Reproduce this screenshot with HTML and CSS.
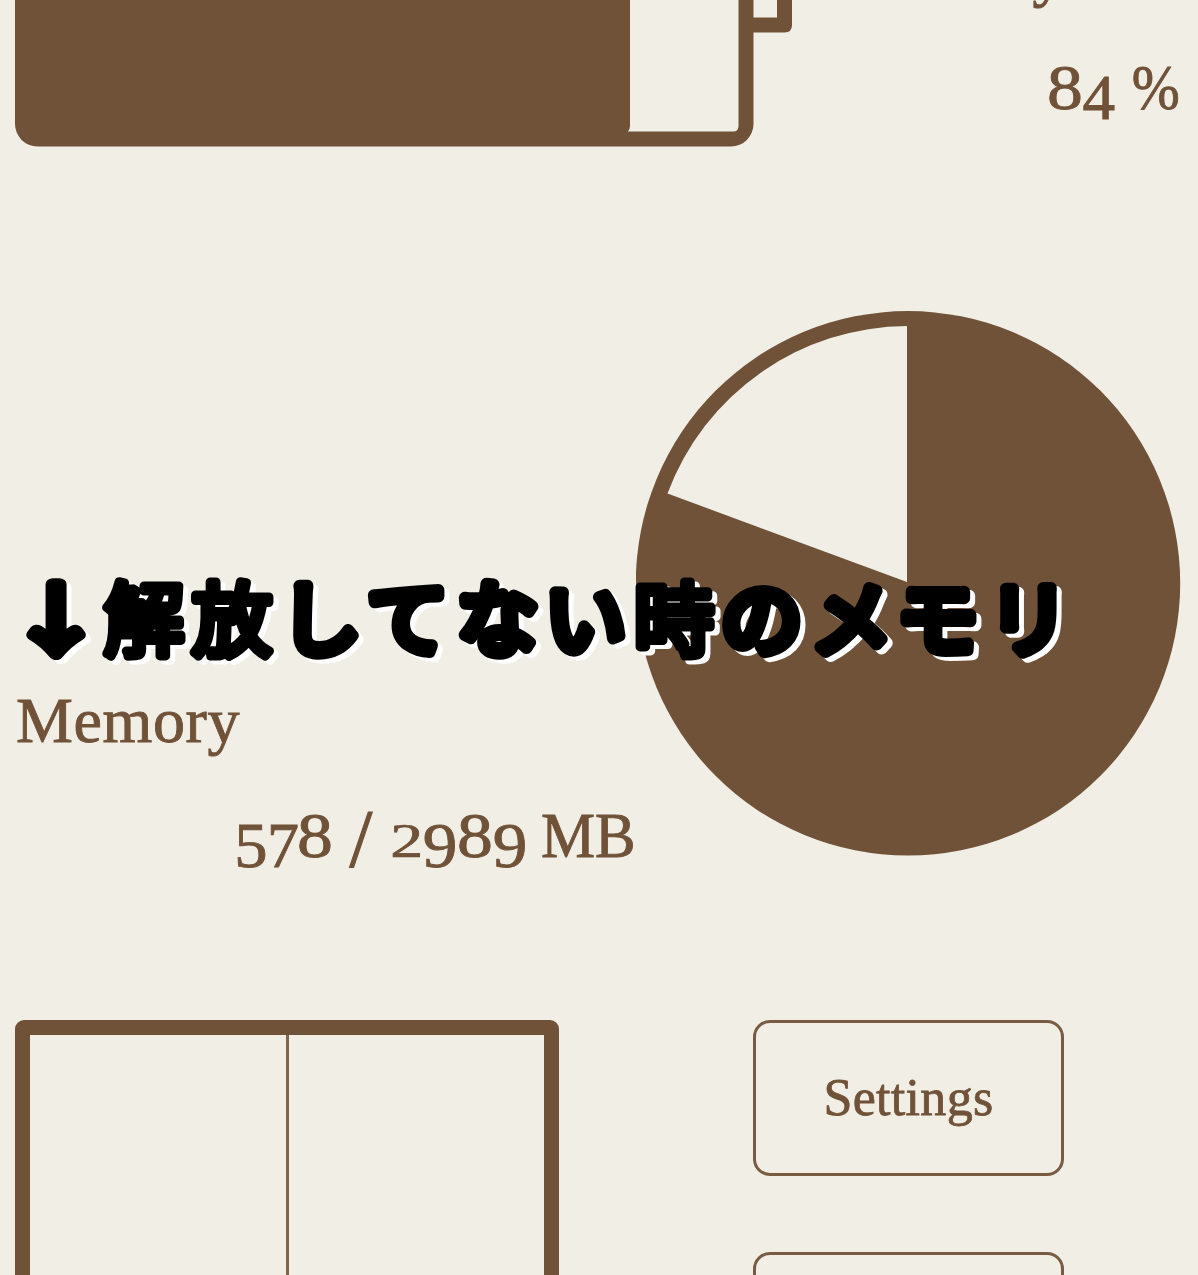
FILE: index.html
```html
<!DOCTYPE html>
<html lang="ja">
<head>
<meta charset="utf-8">
<title>Battery and Memory</title>
<link rel="stylesheet" href="styles.css">
</head>
<body>
<main class="page">
  <section class="battery-row">
    <svg class="battery" width="778" height="147" viewBox="0 0 778 147" aria-hidden="true">
      <path class="ink" fill-rule="evenodd" d="M0 0H738.500V124A22.500 22.500 0 0 1 716 146.500H22.500A22.500 22.500 0 0 1 0 124ZM615 0V126Q615 129 613 131.500H718Q723.500 131.500 723.500 126V0Z"/>
      <path class="ink" d="M738 17.500H762V0H777V25Q777 32.500 769.500 32.500H738Z"/>
    </svg>
    <div class="battery-text">
      <div class="label battery-label">Battery</div>
      <div class="value"><span class="n8">8</span><span class="n4">4</span><span class="sp"> </span><span class="pct">%</span></div>
    </div>
  </section>
  <section class="memory-row">
    <div class="memory-text">
      <div class="label">Memory</div>
      <div class="value"><span class="n5">5</span><span class="n7">7</span><span class="n8">8</span><span class="sp"> </span><span class="slash">/</span><span class="sp"> </span><span class="n2">2</span><span class="n9">9</span><span class="n8">8</span><span class="n9">9</span><span class="sp"> </span><span class="unit">MB</span></div>
    </div>
    <svg class="pie" width="545" height="545" viewBox="0 0 545 545" aria-hidden="true">
      <circle class="ink" cx="272" cy="272.300" r="272.200"/>
      <path class="paper" d="M271 271V15A257 257 0 0 0 31.500 182.500Z"/>
    </svg>
  </section>
  <section class="bottom-row">
    <div class="panes"><div class="pane"></div><div class="pane"></div></div>
    <nav class="buttons">
      <button class="button" type="button">Settings</button>
      <button class="button" type="button" aria-label="More"></button>
    </nav>
  </section>
  <svg class="caption" width="1198" height="130" viewBox="0 0 1198 130">
    <text class="kana" transform="translate(56 88) scale(1.2 .94)" text-anchor="middle">↓</text>
    <text class="kanji" y="89" x="104 192">解放</text>
    <text class="kana" y="89" x="280 367 457 545">してない</text>
    <text class="kanji" y="89" x="634">時</text>
    <text class="kana" y="89" x="721 811 897 988">のメモリ</text>
  </svg>
</main>
</body>
</html>
```
FILE: styles.css
```css
* { box-sizing: border-box; }
body { margin: 0; background: #f1eee5; }
.page {
  position: relative;
  width: 1198px;
  height: 1275px;
  overflow: hidden;
  display: flex;
  flex-direction: column;
  color: #705238;
  font-family: "Liberation Serif", serif;
}
.ink { fill: #705238; }
.paper { fill: #f1eee5; }
svg { display: block; }
.label, .value {
  font-size: 64px;
  line-height: 80px;
  height: 80px;
  white-space: nowrap;
  -webkit-text-stroke: 0.9px #705238;
}
.label { letter-spacing: 0.6px; }
.battery-row {
  display: flex;
  justify-content: space-between;
  height: 147px;
  padding: 0 20px 0 15px;
}
.battery-text {
  display: flex;
  flex-direction: column;
  align-items: flex-end;
  gap: 35px;
  margin-top: -67px;
}
.battery-label { padding-right: 113px; }
.value { display: flex; }
.value span {
  display: block;
  text-align: center;
  white-space: pre;
}
.value .sp { width: 14.5px; }
.value .n8 { width: 35.8px; transform: scaleX(1.12); }
.value .n5 { width: 31.7px; transform: translateY(10px) scaleX(1.04); }
.value .n7 { width: 30.1px; transform: translateY(10px); }
.value .n9 { width: 33.9px; transform: translateY(10px) scaleX(1.08); }
.value .n4 { width: 33.9px; transform: translate(-1px, 10px) scaleX(1.02); }
.value .n2 { width: 33.5px; transform: translateY(3px) scale(1.03, 0.77); transform-origin: 50% 48px; }
.value .slash { width: 28px; transform: translateY(3px) scale(1.28, 1.3); }
.value .pct { width: 49px; margin-right: -2px; text-indent: -2px; transform: scaleX(0.9); }
.value .unit { width: 94.6px; transform: scaleX(0.95); transform-origin: 0 50%; }
.memory-row {
  display: flex;
  justify-content: space-between;
  height: 545px;
  margin-top: 164px;
  padding: 0 17px 0 16px;
}
.memory-text {
  display: flex;
  flex-direction: column;
  gap: 35px;
  width: 620px;
  padding-top: 370px;
}
.memory-text .value { align-self: flex-end; }
.bottom-row {
  display: flex;
  gap: 194px;
  margin-top: 164px;
  padding-left: 15px;
}
.panes {
  display: grid;
  grid-template-columns: 259px 1fr;
  width: 544px;
  height: 544px;
  border: 15px solid #705238;
  border-radius: 9px;
}
.pane:first-child { border-right: 3px solid #80644c; }
.buttons {
  display: flex;
  flex-direction: column;
  gap: 76px;
}
.button {
  width: 311px;
  height: 156px;
  padding: 0 0 1px;
  border: 3px solid #785b42;
  border-radius: 17px;
  background: transparent;
  color: #705238;
  font: 52px "Liberation Serif", serif;
  letter-spacing: 0.3px;
  -webkit-text-stroke: 0.8px #705238;
}
/* Handwritten note laid over the memory section */
.caption {
  position: absolute;
  left: 0;
  top: 560px;
  overflow: visible;
  filter: drop-shadow(5px 4px 0 #fff);
}
.caption text {
  font-family: "Noto Sans CJK JP", sans-serif;
  fill: #000;
  stroke: #000;
  stroke-linejoin: round;
}
.kana { font-size: 81px; font-weight: 400; stroke-width: 12px; }
.kanji { font-size: 80px; font-weight: 400; stroke-width: 9px; }
```
